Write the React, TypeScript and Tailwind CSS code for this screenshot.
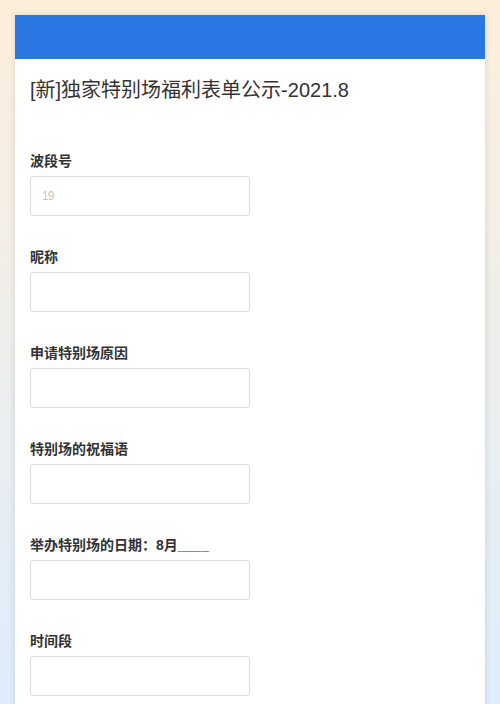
import React from "react";

const fields = [
  { label: "波段号", placeholder: "19" },
  { label: "昵称" },
  { label: "申请特别场原因" },
  { label: "特别场的祝福语" },
  { label: "举办特别场的日期：8月____" },
  { label: "时间段" },
];

export default function App() {
  return (
    <div
      className="w-[500px] h-[704px] overflow-hidden bg-gradient-to-b from-[#fdeedb] to-[#ddedfc] px-[15px] pt-[15px]"
      style={{ fontFamily: '"Liberation Sans", "Noto Sans CJK SC", sans-serif' }}
    >
      <div className="bg-white h-[800px] shadow-[0_0_6px_rgba(0,0,0,0.12)]">
        <div className="h-[44px] bg-[#2a77e4]" />
        <div className="px-[15px] pt-[17px]">
          <h1 className="text-[20px] leading-[28px] text-[#333] font-normal">
            [新]独家特别场福利表单公示-2021.8
          </h1>
          <div className="mt-[47px] flex flex-col gap-[31px]">
            {fields.map((f) => (
              <div key={f.label} className="flex flex-col gap-[5px]">
                <div className="text-[14px] leading-[20px] font-bold text-[#333]">{f.label}</div>
                <div className="w-[220px] h-[40px] border border-[#dcdcdc] rounded-[3px] flex items-center px-[11px]">
                  {f.placeholder && (
                    <span className="text-[12px] text-[#c8c8c8] tracking-[-1px]">{f.placeholder}</span>
                  )}
                </div>
              </div>
            ))}
          </div>
        </div>
      </div>
    </div>
  );
}
